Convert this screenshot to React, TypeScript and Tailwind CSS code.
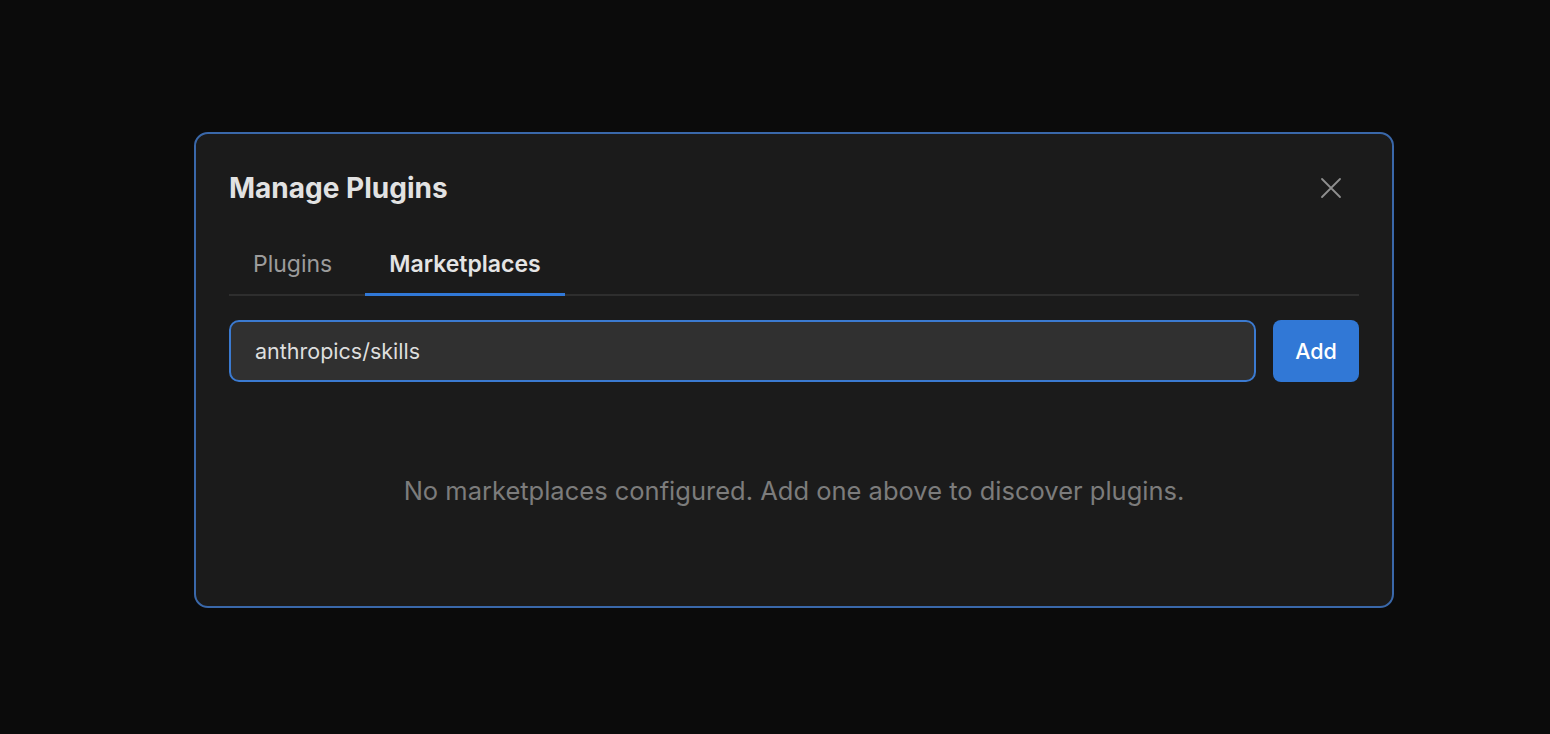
import React from "react";

export default function App() {
  const font = { fontFamily: 'Inter, "Liberation Sans", Arial, sans-serif' };
  return (
    <div className="w-[1550px] h-[734px] bg-[#0b0b0b] overflow-hidden pt-[132px] pl-[194px]" style={font}>
      <div className="w-[1200px] h-[476px] rounded-[14px] border-2 border-[#3a68aa] bg-[#1b1b1b] px-[33px] pt-[36px]">
        <div className="flex items-center justify-between h-[36px]">
          <h1 className="text-[28px] font-bold text-[#e2e2e2] leading-none">Manage Plugins</h1>
          <button className="w-[24px] h-[24px] mr-[16px] flex items-center justify-center text-[#8f8f8f]">
            <svg width="22" height="22" viewBox="0 0 22 22" fill="none" stroke="currentColor" strokeWidth="1.8" strokeLinecap="round">
              <path d="M2 2 L20 20 M20 2 L2 20" />
            </svg>
          </button>
        </div>
        <div className="mt-[30px] flex gap-[9px] border-b-2 border-[#2e2e2e]">
          <button className="px-[24px] h-[60px] text-[23px] text-[#9c9c9c] -mb-[2px] border-b-[3px] border-transparent">Plugins</button>
          <button className="px-[24px] h-[60px] text-[23px] font-semibold text-[#e4e4e4] -mb-[2px] border-b-[3px] border-[#3179d8]">Marketplaces</button>
        </div>
        <div className="mt-[24px] flex gap-[17px]">
          <div className="flex-1 h-[62px] rounded-[10px] border-2 border-[#3b7ad0] bg-[#303030] flex items-center px-[24px]">
            <span className="text-[21.5px] text-[#dedede]">anthropics/skills</span>
          </div>
          <button className="w-[86px] h-[62px] rounded-[8px] bg-[#3178d6] text-white text-[21.5px] font-medium">Add</button>
        </div>
        <div className="mt-[90px] text-center text-[25.5px] text-[#7c7c7c]">
          No marketplaces configured. Add one above to discover plugins.
        </div>
      </div>
    </div>
  );
}
